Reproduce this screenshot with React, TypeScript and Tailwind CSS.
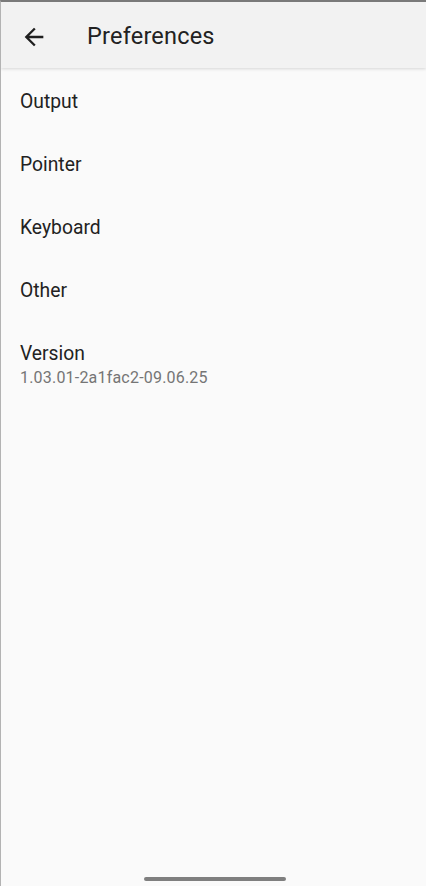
const items = ["Output", "Pointer", "Keyboard", "Other"];

function BackArrow() {
  return (
    <svg width="28" height="28" viewBox="0 0 24 24" fill="currentColor">
      <path d="M20 11H7.83l5.59-5.59L12 4l-8 8 8 8 1.41-1.41L7.83 13H20v-2z" />
    </svg>
  );
}

export default function App() {
  return (
    <div
      className="relative h-[886px] w-[426px] overflow-hidden border-l border-l-[#b3b3b3] border-t-2 border-t-[#7a7a7a] bg-[#fafafa] text-[#222222]"
      style={{ fontFamily: "Roboto, 'Noto Sans', sans-serif" }}
    >
      <header className="flex h-[66px] items-center bg-[#f2f2f2] pt-[3px] shadow-[0_1px_3px_rgba(0,0,0,0.15)]">
        <button className="ml-[19px] flex h-7 w-7 items-center justify-center text-[#1f1f1f]">
          <BackArrow />
        </button>
        <h1 className="ml-[39px] text-[23.5px] font-normal tracking-[0.2px]">Preferences</h1>
      </header>

      <ul className="pt-[3px]">
        {items.map((item) => (
          <li key={item} className="flex h-[63px] items-center pl-[19px] text-[19.3px]">
            {item}
          </li>
        ))}
        <li className="flex flex-col pl-[19px] pt-[19px]">
          <span className="text-[19.3px] leading-[24px]">Version</span>
          <span className="text-[16px] leading-[24px] tracking-[0.2px] text-[#757575]">1.03.01-2a1fac2-09.06.25</span>
        </li>
      </ul>

      <div className="absolute bottom-[5px] left-[143px] h-[4px] w-[142px] rounded-full bg-[#7f7f7f]" />
    </div>
  );
}
